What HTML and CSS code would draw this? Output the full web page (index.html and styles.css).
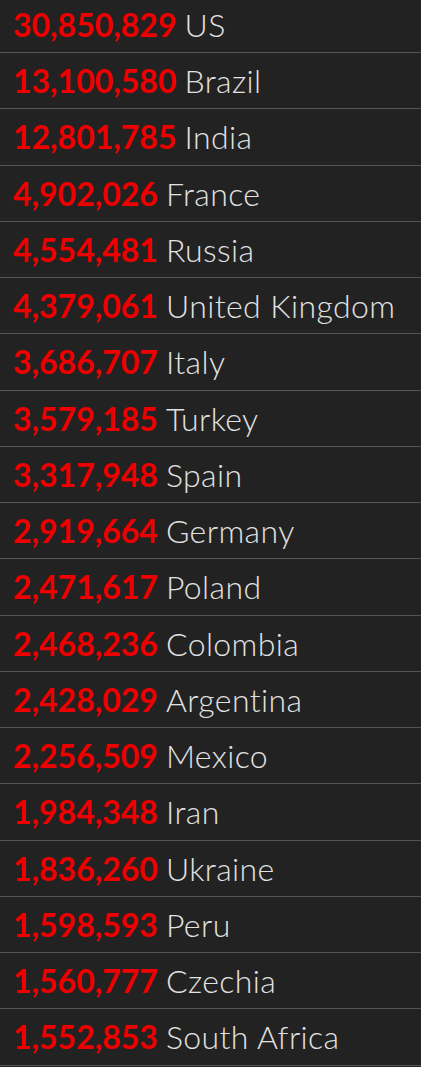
FILE: index.html
```html
<!DOCTYPE html>
<html>
<head>
<meta charset="utf-8">
<link rel="stylesheet" href="styles.css">
</head>
<body>
<ul class="list">
  <li class="row"><span class="num">30,850,829</span><span class="name">US</span></li>
  <li class="row"><span class="num">13,100,580</span><span class="name">Brazil</span></li>
  <li class="row"><span class="num">12,801,785</span><span class="name">India</span></li>
  <li class="row"><span class="num">4,902,026</span><span class="name">France</span></li>
  <li class="row"><span class="num">4,554,481</span><span class="name">Russia</span></li>
  <li class="row"><span class="num">4,379,061</span><span class="name">United Kingdom</span></li>
  <li class="row"><span class="num">3,686,707</span><span class="name">Italy</span></li>
  <li class="row"><span class="num">3,579,185</span><span class="name">Turkey</span></li>
  <li class="row"><span class="num">3,317,948</span><span class="name">Spain</span></li>
  <li class="row"><span class="num">2,919,664</span><span class="name">Germany</span></li>
  <li class="row"><span class="num">2,471,617</span><span class="name">Poland</span></li>
  <li class="row"><span class="num">2,468,236</span><span class="name">Colombia</span></li>
  <li class="row"><span class="num">2,428,029</span><span class="name">Argentina</span></li>
  <li class="row"><span class="num">2,256,509</span><span class="name">Mexico</span></li>
  <li class="row"><span class="num">1,984,348</span><span class="name">Iran</span></li>
  <li class="row"><span class="num">1,836,260</span><span class="name">Ukraine</span></li>
  <li class="row"><span class="num">1,598,593</span><span class="name">Peru</span></li>
  <li class="row"><span class="num">1,560,777</span><span class="name">Czechia</span></li>
  <li class="row"><span class="num">1,552,853</span><span class="name">South Africa</span></li>
</ul>
</body>
</html>
```
FILE: styles.css
```css
html, body {
  margin: 0;
  padding: 0;
  background: #222222;
  overflow: hidden;
}
.list {
  list-style: none;
  margin: -3.25px 0 0 0;
  padding: 0;
}
.row {
  height: 55.25px;
  border-bottom: 1px solid #555555;
  display: flex;
  align-items: center;
  gap: 8px;
  padding-left: 13px;
  font-family: Lato, "Liberation Sans", sans-serif;
  font-size: 32px;
  white-space: nowrap;
  font-variant-ligatures: none;
}
.num {
  color: #ee0000;
  font-weight: 700;
}
.name {
  color: #e2e2e2;
  font-weight: 300;
  letter-spacing: 0.4px;
}
```
